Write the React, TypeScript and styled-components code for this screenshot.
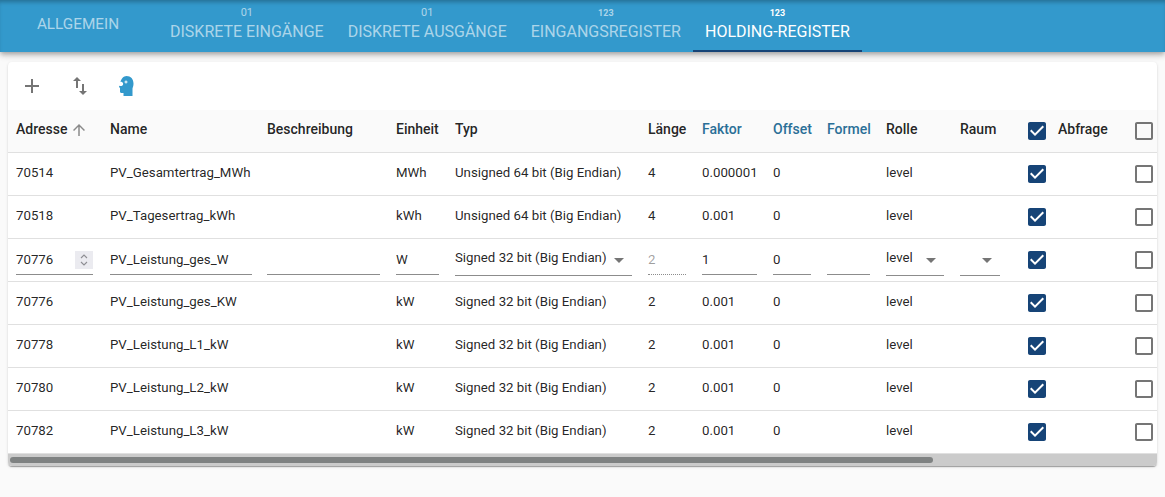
import React from 'react';
import styled, { createGlobalStyle } from 'styled-components';

const GlobalStyle = createGlobalStyle`
    html, body {
        margin: 0;
        padding: 0;
        height: 100%;
        background-color: #fafafa;
        font-family: Roboto, "Liberation Sans", sans-serif;
        overflow: hidden;
    }
`;

const Page = styled.div`
    width: 1165px;
    height: 497px;
    overflow: hidden;
`;

const AppBar = styled.header`
    display: flex;
    align-items: stretch;
    height: 52px;
    background-color: #3399cc;
    box-shadow: inset 0 4px 4px -2px rgba(0, 0, 0, 0.28), 0 2px 4px -1px rgba(0, 0, 0, 0.2), 0 4px 5px 0 rgba(0, 0, 0, 0.14), 0 1px 10px 0 rgba(0, 0, 0, 0.12);
`;

const Tab = styled.div<{ $active?: boolean; $wide?: boolean }>`
    display: flex;
    flex-direction: column;
    align-items: center;
    justify-content: ${props => props.$wide ? 'center' : 'flex-end'};
    box-sizing: border-box;
    width: ${props => props.$wide ? '156px' : 'auto'};
    margin-right: ${props => props.$wide ? '2px' : '0'};
    padding: ${props => props.$wide ? '0 0 3px' : '0 12px 10px'};
    font-size: ${props => props.$wide ? '15.3px' : '16px'};
    line-height: 16px;
    text-transform: uppercase;
    color: ${props => props.$active ? '#ffffff' : 'rgba(255, 255, 255, 0.6)'};
    border-bottom: 2px solid ${props => props.$active ? '#164477' : 'transparent'};
`;

const TabBadge = styled.span<{ $bold?: boolean }>`
    font-size: ${props => props.$bold ? '9px' : '11px'};
    font-weight: ${props => props.$bold ? 700 : 400};
    line-height: 12px;
    margin-bottom: 5px;
`;

const Card = styled.main`
    margin: 10px 8px 0;
    background-color: #ffffff;
    border-radius: 4px;
    overflow: hidden;
    box-shadow: 0 2px 1px -1px rgba(0, 0, 0, 0.2), 0 1px 1px 0 rgba(0, 0, 0, 0.14), 0 1px 3px 0 rgba(0, 0, 0, 0.12);
`;

const Toolbar = styled.div`
    display: flex;
    align-items: center;
    height: 48px;
    padding-left: 12px;
    gap: 24px;
`;

const ToolIcon = styled.svg<{ $color?: string }>`
    width: 24px;
    height: 24px;
    fill: ${props => props.$color || '#757575'};
`;

const Table = styled.table`
    table-layout: fixed;
    border-collapse: collapse;
    width: 1211px;
    font-size: 13.25px;
    color: rgba(0, 0, 0, 0.87);
`;

const HeadCell = styled.th<{ $accent?: boolean; $flush?: boolean }>`
    height: 42px;
    padding: 0 0 ${props => props.$flush ? '0' : '4px'} 8px;
    box-sizing: border-box;
    text-align: left;
    font-size: 14px;
    font-weight: 500;
    background-color: #fafafa;
    border-bottom: 1px solid #e0e0e0;
    color: ${props => props.$accent ? '#2a6f97' : 'rgba(0, 0, 0, 0.87)'};
    white-space: nowrap;
`;

const Cell = styled.td<{ $flush?: boolean }>`
    height: 43px;
    padding: 0 0 ${props => props.$flush ? '0' : '2px'} 8px;
    box-sizing: border-box;
    border-bottom: 1px solid #e0e0e0;
    white-space: nowrap;
    overflow: hidden;
`;

const SortLabel = styled.span`
    display: inline-flex;
    align-items: center;
    gap: 3px;
`;

const SortIcon = styled.svg`
    width: 18px;
    height: 18px;
    margin-top: 2px;
    fill: #8a8a8a;
`;

const CheckIcon = styled.svg<{ $checked?: boolean }>`
    display: block;
    width: 24px;
    height: 24px;
    margin-left: -3px;
    fill: ${props => props.$checked ? '#164477' : '#757575'};
`;

const Field = styled.div<{ $width: number; $dotted?: boolean; $select?: boolean }>`
    display: flex;
    align-items: center;
    justify-content: space-between;
    box-sizing: border-box;
    width: ${props => props.$width}px;
    height: ${props => props.$select ? '31px' : '29px'};
    margin-top: ${props => props.$select ? '2px' : '1px'};
    border-bottom: 1px ${props => props.$dotted ? 'dotted' : 'solid'} #8c8c8c;
    color: ${props => props.$dotted ? 'rgba(0, 0, 0, 0.38)' : 'inherit'};
    padding-bottom: ${props => props.$select ? '5px' : '0'};
`;

const Input = styled.input`
    flex: 1;
    min-width: 0;
    border: none;
    outline: none;
    padding: 0;
    margin: 0;
    background: transparent;
    color: inherit;
    font: inherit;
`;

const Stepper = styled.span`
    display: flex;
    align-items: center;
    justify-content: center;
    flex: none;
    width: 18px;
    height: 18px;
    background-color: #ebebf0;
`;

const StepperIcon = styled.svg`
    width: 12px;
    height: 16px;
    fill: none;
    stroke: #8e8e93;
    stroke-width: 1.1;
`;

const Caret = styled.svg`
    flex: none;
    width: 24px;
    height: 24px;
    margin: 4px 1px 0 0;
    fill: #757575;
`;

const ScrollTrack = styled.div`
    height: 12px;
    background-color: #cbcbcb;
    padding: 3px 2px 0;
    box-sizing: border-box;
`;

const ScrollThumb = styled.div`
    width: 923px;
    height: 6px;
    border-radius: 3px;
    background-color: #7f8282;
`;

const columns = [94, 157, 129, 59, 193, 54, 71, 54, 59, 74, 68, 30, 77, 92];

const rows = [
    ['70514', 'PV_Gesamtertrag_MWh', 'MWh', 'Unsigned 64 bit (Big Endian)', '4', '0.000001'],
    ['70518', 'PV_Tagesertrag_kWh', 'kWh', 'Unsigned 64 bit (Big Endian)', '4', '0.001'],
    null,
    ['70776', 'PV_Leistung_ges_KW', 'kW', 'Signed 32 bit (Big Endian)', '2', '0.001'],
    ['70778', 'PV_Leistung_L1_kW', 'kW', 'Signed 32 bit (Big Endian)', '2', '0.001'],
    ['70780', 'PV_Leistung_L2_kW', 'kW', 'Signed 32 bit (Big Endian)', '2', '0.001'],
    ['70782', 'PV_Leistung_L3_kW', 'kW', 'Signed 32 bit (Big Endian)', '2', '0.001'],
];

const Check: React.FC<{ checked?: boolean }> = ({ checked }) => (
    <CheckIcon $checked={checked} viewBox="0 0 24 24">
        {checked
            ? <path d="M19 3H5c-1.11 0-2 .9-2 2v14c0 1.1.89 2 2 2h14c1.11 0 2-.9 2-2V5c0-1.1-.89-2-2-2zm-9 14l-5-5 1.41-1.41L10 14.17l7.59-7.59L19 8l-9 9z" />
            : <path d="M19 5v14H5V5h14m0-2H5c-1.1 0-2 .9-2 2v14c0 1.1.9 2 2 2h14c1.1 0 2-.9 2-2V5c0-1.1-.9-2-2-2z" />}
    </CheckIcon>
);

const DropCaret = () => (
    <Caret viewBox="0 0 24 24"><path d="M7 10l5 5 5-5z" /></Caret>
);

const EditRow = () => (
    <tr>
        <Cell $flush>
            <Field $width={77}>
                <Input defaultValue="70776" />
                <Stepper>
                    <StepperIcon viewBox="0 0 12 16">
                        <path d="M3 6l3-3 3 3M3 10l3 3 3-3" />
                    </StepperIcon>
                </Stepper>
            </Field>
        </Cell>
        <Cell $flush><Field $width={142}><Input defaultValue="PV_Leistung_ges_W" /></Field></Cell>
        <Cell $flush><Field $width={113}><Input /></Field></Cell>
        <Cell $flush><Field $width={43}><Input defaultValue="W" /></Field></Cell>
        <Cell $flush><Field $width={177} $select>Signed 32 bit (Big Endian)<DropCaret /></Field></Cell>
        <Cell $flush><Field $width={38} $dotted><Input defaultValue="2" disabled /></Field></Cell>
        <Cell $flush><Field $width={55}><Input defaultValue="1" /></Field></Cell>
        <Cell $flush><Field $width={38}><Input defaultValue="0" /></Field></Cell>
        <Cell $flush><Field $width={43}><Input /></Field></Cell>
        <Cell $flush><Field $width={58} $select>level<DropCaret /></Field></Cell>
        <Cell $flush><Field $width={40} $select><span /><DropCaret /></Field></Cell>
        <Cell $flush><Check checked /></Cell>
        <Cell $flush />
        <Cell $flush><Check /></Cell>
    </tr>
);

const App: React.FC = () => {
    return (
        <Page>
            <GlobalStyle />
            <AppBar>
                <Tab $wide>Allgemein</Tab>
                <Tab><TabBadge>01</TabBadge>Diskrete Eingänge</Tab>
                <Tab><TabBadge>01</TabBadge>Diskrete Ausgänge</Tab>
                <Tab><TabBadge $bold>123</TabBadge>Eingangsregister</Tab>
                <Tab $active><TabBadge $bold>123</TabBadge>Holding-Register</Tab>
            </AppBar>
            <Card>
                <Toolbar>
                    <ToolIcon viewBox="0 0 24 24"><path d="M19 13h-6v6h-2v-6H5v-2h6V5h2v6h6v2z" /></ToolIcon>
                    <ToolIcon viewBox="0 0 24 24"><path d="M9 3 5 6.99h3V14h2V6.99h3L9 3zm7 14.01V10h-2v7.01h-3L15 21l4-3.99h-3z" /></ToolIcon>
                    <ToolIcon $color="#3399cc" viewBox="0 0 24 24">
                        <path fillRule="evenodd" d="M10.500 2C14.800 2 17.500 5 17.500 9.500c0 2-.5 3.500-1 5V22h-9v-3H5.500C4.500 19 4 18.300 4 17.500V14l-.8-.8c-.3-.5-.2-1 .2-1.400l.1-.1c1.200.6 3 .2 3.500-1s-.2-2.500-1.500-2.900l-1 .1C5.200 4.800 7.500 2 10.500 2zM9.500 6.500h1v1h1v1h-1v1h-1v-1h-1v-1h1z" />
                    </ToolIcon>
                </Toolbar>
                <Table>
                    <colgroup>
                        {columns.map((width, i) => <col key={i} style={{ width }} />)}
                    </colgroup>
                    <thead>
                        <tr>
                            <HeadCell>
                                <SortLabel>
                                    Adresse
                                    <SortIcon viewBox="0 0 24 24"><path d="M4 12l1.410 1.410L11 7.830V20h2V7.830l5.580 5.590L20 12l-8-8-8 8z" /></SortIcon>
                                </SortLabel>
                            </HeadCell>
                            <HeadCell>Name</HeadCell>
                            <HeadCell>Beschreibung</HeadCell>
                            <HeadCell>Einheit</HeadCell>
                            <HeadCell>Typ</HeadCell>
                            <HeadCell>Länge</HeadCell>
                            <HeadCell $accent>Faktor</HeadCell>
                            <HeadCell $accent>Offset</HeadCell>
                            <HeadCell $accent>Formel</HeadCell>
                            <HeadCell>Rolle</HeadCell>
                            <HeadCell>Raum</HeadCell>
                            <HeadCell $flush><Check checked /></HeadCell>
                            <HeadCell>Abfrage</HeadCell>
                            <HeadCell $flush><Check /></HeadCell>
                        </tr>
                    </thead>
                    <tbody>
                        {rows.map((row, i) => row === null ? <EditRow key={i} /> : (
                            <tr key={i}>
                                <Cell>{row[0]}</Cell>
                                <Cell>{row[1]}</Cell>
                                <Cell />
                                <Cell>{row[2]}</Cell>
                                <Cell>{row[3]}</Cell>
                                <Cell>{row[4]}</Cell>
                                <Cell>{row[5]}</Cell>
                                <Cell>0</Cell>
                                <Cell />
                                <Cell>level</Cell>
                                <Cell />
                                <Cell $flush><Check checked /></Cell>
                                <Cell />
                                <Cell $flush><Check /></Cell>
                            </tr>
                        ))}
                    </tbody>
                </Table>
                <ScrollTrack><ScrollThumb /></ScrollTrack>
            </Card>
        </Page>
    );
};

export default App;
